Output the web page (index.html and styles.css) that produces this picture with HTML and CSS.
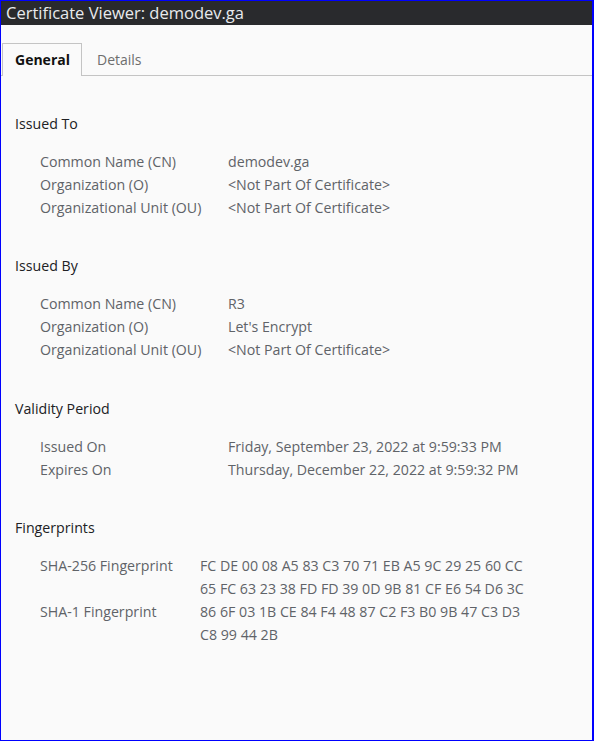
FILE: index.html
```html
<!DOCTYPE html>
<html>
<head>
<meta charset="utf-8">
<link rel="stylesheet" href="styles.css">
</head>
<body>
<div class="window">
  <div class="titlebar">Certificate Viewer: demodev.ga</div>
  <div class="tabs">
    <div class="tab active">General</div>
    <div class="tab">Details</div>
  </div>
  <div class="content">
    <section class="section">
      <div class="heading">Issued To</div>
      <div class="grid">
        <div class="label">Common Name (CN)</div><div class="value">demodev.ga</div>
        <div class="label">Organization (O)</div><div class="value">&lt;Not Part Of Certificate&gt;</div>
        <div class="label">Organizational Unit (OU)</div><div class="value">&lt;Not Part Of Certificate&gt;</div>
      </div>
    </section>
    <section class="section">
      <div class="heading">Issued By</div>
      <div class="grid">
        <div class="label">Common Name (CN)</div><div class="value">R3</div>
        <div class="label">Organization (O)</div><div class="value">Let's Encrypt</div>
        <div class="label">Organizational Unit (OU)</div><div class="value">&lt;Not Part Of Certificate&gt;</div>
      </div>
    </section>
    <section class="section">
      <div class="heading">Validity Period</div>
      <div class="grid">
        <div class="label">Issued On</div><div class="value">Friday, September 23, 2022 at 9:59:33 PM</div>
        <div class="label">Expires On</div><div class="value">Thursday, December 22, 2022 at 9:59:32 PM</div>
      </div>
    </section>
    <section class="section">
      <div class="heading">Fingerprints</div>
      <div class="grid fp">
        <div class="label">SHA-256 Fingerprint</div>
        <div class="value"><span class="line">FC DE 00 08 A5 83 C3 70 71 EB A5 9C 29 25 60 CC</span><span class="line">65 FC 63 23 38 FD FD 39 0D 9B 81 CF E6 54 D6 3C</span></div>
        <div class="label">SHA-1 Fingerprint</div>
        <div class="value"><span class="line">86 6F 03 1B CE 84 F4 48 87 C2 F3 B0 9B 47 C3 D3</span><span class="line">C8 99 44 2B</span></div>
      </div>
    </section>
  </div>
</div>
</body>
</html>
```
FILE: styles.css
```css
html, body {
  margin: 0;
  padding: 0;
  height: 100%;
}
body {
  background: #fafafa;
  font-family: "Open Sans", "Noto Sans", sans-serif;
  box-sizing: border-box;
}
.window {
  box-sizing: border-box;
  height: 741px;
  border: 1px solid #0000ff;
  border-right-width: 2px;
  background: #fafafa;
  display: flex;
  flex-direction: column;
}
.titlebar {
  height: 24px;
  background: #292a2d;
  color: #e8eaed;
  font-size: 16.5px;
  line-height: 23px;
  padding-left: 5px;
}
.tabs {
  display: flex;
  padding-top: 18px;
  padding-left: 1px;
  border-bottom: 1px solid #c4c4c4;
  height: 32px;
}
.tab {
  font-size: 14px;
  color: #6e6e6e;
  padding: 0 14px;
  line-height: 31px;
  border: 1px solid transparent;
  border-bottom: none;
  margin-bottom: -1px;
}
.tab.active {
  color: #111;
  font-weight: 700;
  border-color: #c4c4c4;
  background: #fafafa;
  height: 32px;
  padding: 0 12px 0 12px;
  width: 54px;
}
.content {
  padding: 37px 0 0 14px;
}
.section {
  margin-bottom: 36px;
}
.heading {
  font-size: 14.2px;
  line-height: 22.8px;
  color: #202124;
  margin-bottom: 15.2px;
}
.grid {
  display: grid;
  grid-template-columns: 188px 1fr;
  padding-left: 25px;
  font-size: 14.2px;
  line-height: 22.8px;
  color: #5f6368;
}
.grid.fp {
  grid-template-columns: 160px 1fr;
}
.line {
  display: block;
}
```
